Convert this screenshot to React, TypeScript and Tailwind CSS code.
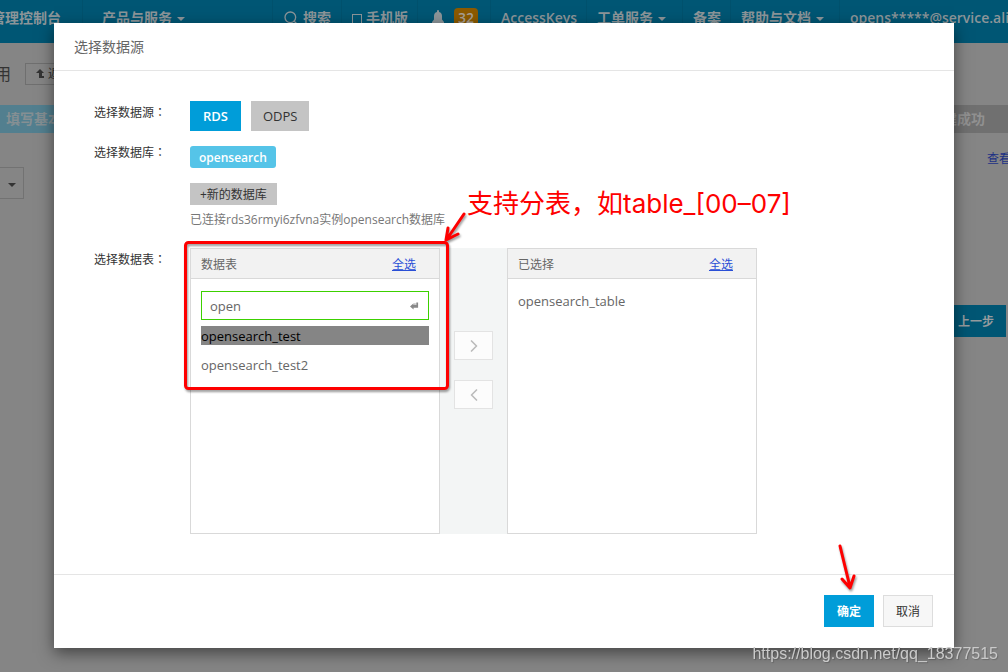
import React from 'react';
import clsx from 'clsx';
import { ChevronLeft, ChevronRight, Search } from 'lucide-react';

interface NavItemProps {
  children: React.ReactNode;
  caret?: boolean;
  className?: string;
}

const Caret = ({ className = '' }: { className?: string }) => (
  <span
    className={clsx(
      'inline-block border-x-4 border-t-4 border-x-transparent border-t-current',
      className
    )}
  />
);

const NavItem = ({ children, caret, className = '' }: NavItemProps) => (
  <a
    href="#"
    className={clsx(
      'flex h-9 shrink-0 items-center border-l border-[#00516d] pl-[10px] whitespace-nowrap',
      className
    )}
  >
    {children}
    {caret && <Caret className="ml-[5px] mt-[2px]" />}
  </a>
);

const BellIcon = () => (
  <svg width="14" height="16" viewBox="0 0 14 16" fill="currentColor" className="ml-[3px]">
    <path d="M6 1a1 1 0 0 1 2 0v1c2.200.4 3 2.200 3 4v3.500l2 2.500v1H1v-1l2-2.500V6c0-1.800.8-3.600 3-4zM5.500 14h3a1.500 1.500 0 0 1-3 0z" />
  </svg>
);

const TopNav = () => (
  <nav className="flex h-[43px] overflow-hidden bg-[#005674] text-sm font-semibold text-[#8c9599]">
    <NavItem className="w-[82px] justify-end border-l-0 pr-[21px]">管理控制台</NavItem>
    <NavItem caret className="w-[190px] pl-[19px]">产品与服务</NavItem>
    <NavItem className="w-[69px] pl-[9px]">
      <Search size={16} className="mr-1" />
      搜索
    </NavItem>
    <NavItem className="w-[76px] pl-[9px]">
      <span className="mr-1 mt-[2px] h-[10px] w-[10px] border border-current" />
      手机版
    </NavItem>
    <NavItem className="w-[73px]">
      <BellIcon />
      <span className="ml-[9px] rounded-sm bg-[#8c5a00] px-1 text-[#a8a096]">32</span>
    </NavItem>
    <NavItem className="w-[96px]">AccessKeys</NavItem>
    <NavItem caret className="w-[96px]">工单服务</NavItem>
    <NavItem className="w-[48px]">备案</NavItem>
    <NavItem caret className="w-[109px]">帮助与文档</NavItem>
    <NavItem>opens*****@service.aliyun.com</NavItem>
  </nav>
);

const PageBehind = () => (
  <div className="overflow-hidden text-[#333]">
    <TopNav />
    <div className="flex h-[62px] items-center">
      <span className="flex w-[25px] justify-end pr-[14px] text-base whitespace-nowrap">应用</span>
      <button className="flex h-[22px] shrink-0 items-center gap-[2px] border border-[#6f6f6f] pl-2 pr-2 text-xs whitespace-nowrap">
        <svg width="12" height="10" viewBox="0 0 12 10" fill="currentColor">
          <path d="M6 0l4 4H8v3h2v2H5V4H2z" />
        </svg>
        返回
      </button>
    </div>
    <div className="flex h-7 items-center text-sm font-semibold">
      <div className="flex h-full w-1/2 items-center bg-[#527f8f] pl-[6px] text-[#858f93]">填写基本信息</div>
      <div className="flex h-full w-1/2 items-center justify-end bg-[#707070] pr-[23px] text-[#919191]">创建成功</div>
    </div>
    <div className="flex justify-between pt-[34px]">
      <button
        aria-label="展开"
        className="flex h-8 w-6 items-center justify-center border border-l-0 border-[#727272] pt-1"
      >
        <Caret />
      </button>
      <a href="#" className="-mt-4 -mr-[3px] h-6 text-xs text-[#1d3184]">查看</a>
    </div>
    <div className="mt-[106px] flex justify-end pr-[2px]">
      <button className="h-8 bg-[#005674] px-3 pt-[2px] text-xs font-semibold text-[#959b9e]">上一步</button>
    </div>
  </div>
);

interface FieldRowProps {
  label: string;
  children: React.ReactNode;
  className?: string;
}

const FieldRow = ({ label, children, className = '' }: FieldRowProps) => (
  <div role="group" aria-label={label} className={clsx('flex', className)}>
    <div className="w-24 shrink-0 text-xs leading-[22px] text-[#333]">
      {label}
      <span lang="zh-Hant" className="font-['Noto_Sans_CJK_TC',sans-serif]">：</span>
    </div>
    <div className="min-w-0">{children}</div>
  </div>
);

interface TableBoxProps {
  title: string;
  children: React.ReactNode;
}

const TableBox = ({ title, children }: TableBoxProps) => (
  <section className="w-[250px] border border-[#d9d9d9] bg-white">
    <header className="flex h-[30px] items-center justify-between border-b border-[#d9d9d9] bg-[#f2f2f2] pl-[10px] pr-[23px] pt-[3px] text-xs text-[#666]">
      <span>{title}</span>
      <a href="#" className="text-[#2a4fd6] underline">全选</a>
    </header>
    {children}
  </section>
);

const moveButton =
  'flex h-[29px] w-[39px] items-center justify-center border border-[#e3e3e3] bg-[#fcfcfc] text-[#bbb]';

const TableTransfer = () => (
  <div className="flex min-h-[286px] bg-[#f3f5f5]">
    <TableBox title="数据表">
      <div className="px-[10px] pt-3">
        <div className="flex h-[29px] items-center border border-[#3cd000] pr-[9px]">
          <input
            aria-label="搜索数据表"
            defaultValue="open"
            className="w-full min-w-0 bg-transparent pl-2 pt-[2px] text-[13px] text-[#666] outline-none"
          />
          <svg width="9" height="8" viewBox="0 0 10 8" fill="#888" className="shrink-0">
            <path d="M0 4.500L4 1v2h1V1h1v2h1V0h2v6H4V8z" />
          </svg>
        </div>
        <ul className="mt-[6px] text-[13px] text-[#666]">
          <li className="bg-[#858585] pt-[2px] leading-[17px] text-black">opensearch_test</li>
          <li className="mt-[10px] pt-[2px] leading-[17px]">opensearch_test2</li>
        </ul>
      </div>
    </TableBox>
    <div className="flex w-[67px] flex-col items-center gap-5 pt-[83px]">
      <button aria-label="添加" className={moveButton}>
        <ChevronRight size={20} />
      </button>
      <button aria-label="移除" className={moveButton}>
        <ChevronLeft size={20} />
      </button>
    </div>
    <TableBox title="已选择">
      <ul className="px-[10px] pt-3 text-[13px] text-[#666]">
        <li className="leading-5">opensearch_table</li>
      </ul>
    </TableBox>
  </div>
);

// Hand-drawn marks that lie over the dialog
const Annotations = () => (
  <div className="pointer-events-none absolute inset-0 text-[#fe0000]">
    <p className="absolute left-[413px] top-[161px] whitespace-nowrap font-['Inter','Noto_Sans_CJK_SC',sans-serif] text-[26px] leading-10">
      支持分表，如table_[00–07]
    </p>
    <svg
      width="900"
      height="625"
      viewBox="0 0 900 625"
      fill="none"
      stroke="currentColor"
      strokeWidth="3"
      strokeLinecap="round"
      strokeLinejoin="round"
      className="absolute left-0 top-0 drop-shadow-[1px_2px_1px_rgba(0,0,0,0.4)]"
    >
      <rect x="131.500" y="219.500" width="262" height="146" rx="3" />
      <path d="M410 191L393 216M394 205L392 217L404 211" />
      <path d="M786 523L796 564M788 556L796 565L800 553" />
    </svg>
  </div>
);

const DataSourceDialog = () => (
  <div
    role="dialog"
    aria-label="选择数据源"
    className="relative mx-auto w-full max-w-[900px] bg-white shadow-[0_5px_15px_rgba(0,0,0,0.5)]"
  >
    <h2 className="flex h-12 items-center border-b border-[#e5e5e5] px-5 text-sm text-[#666]">选择数据源</h2>
    <div className="pb-10 pl-10 pt-[30px]">
      <FieldRow label="选择数据源">
        <div className="flex gap-[10px] text-[13px]">
          <button className="h-[30px] bg-[#009dd9] px-[13px] pt-[2px] font-semibold text-white">RDS</button>
          <button className="h-[30px] bg-[#c4c4c4] px-3 pt-[2px] text-[#333]">ODPS</button>
        </div>
      </FieldRow>
      <FieldRow label="选择数据库" className="mt-[10px]">
        <div className="pt-[5px]">
          <button className="block h-[22px] rounded-[3px] bg-[#55c4e8] px-[9px] pt-[2px] text-xs font-semibold text-white">
            opensearch
          </button>
          <button className="mt-[15px] block h-[22px] bg-[#c4c4c4] px-[10px] pt-[2px] text-xs text-[#333]">
            +新的数据库
          </button>
          <p className="mt-[5px] text-xs leading-5 text-[#777]">已连接rds36rmyi6zfvna实例opensearch数据库</p>
        </div>
      </FieldRow>
      <FieldRow label="选择数据表" className="mt-[18px]">
        <TableTransfer />
      </FieldRow>
    </div>
    <footer className="flex h-[74px] items-center justify-end gap-[9px] border-t border-[#e5e5e5] pb-[2px] pr-[21px] text-xs">
      <button className="h-8 bg-[#009dd9] px-[13px] pt-[2px] font-bold text-white">确定</button>
      <button className="h-8 border border-[#ddd] bg-[#f7f7f7] px-3 pt-[2px] text-[#333]">取消</button>
    </footer>
    <Annotations />
  </div>
);

export default function App() {
  return (
    <div className="relative min-h-screen overflow-hidden bg-[#858585] font-['Open_Sans','Noto_Sans_CJK_SC',sans-serif]">
      <PageBehind />
      <div className="absolute inset-x-0 top-0 px-4 pt-[23px]">
        <DataSourceDialog />
      </div>
      <span className="fixed bottom-[6px] right-[10px] font-['Liberation_Sans',sans-serif] text-base leading-6 text-[#cacaca] [text-shadow:1px_1px_1px_rgba(0,0,0,0.2)]">
        https://blog.csdn.net/qq_18377515
      </span>
    </div>
  );
}
